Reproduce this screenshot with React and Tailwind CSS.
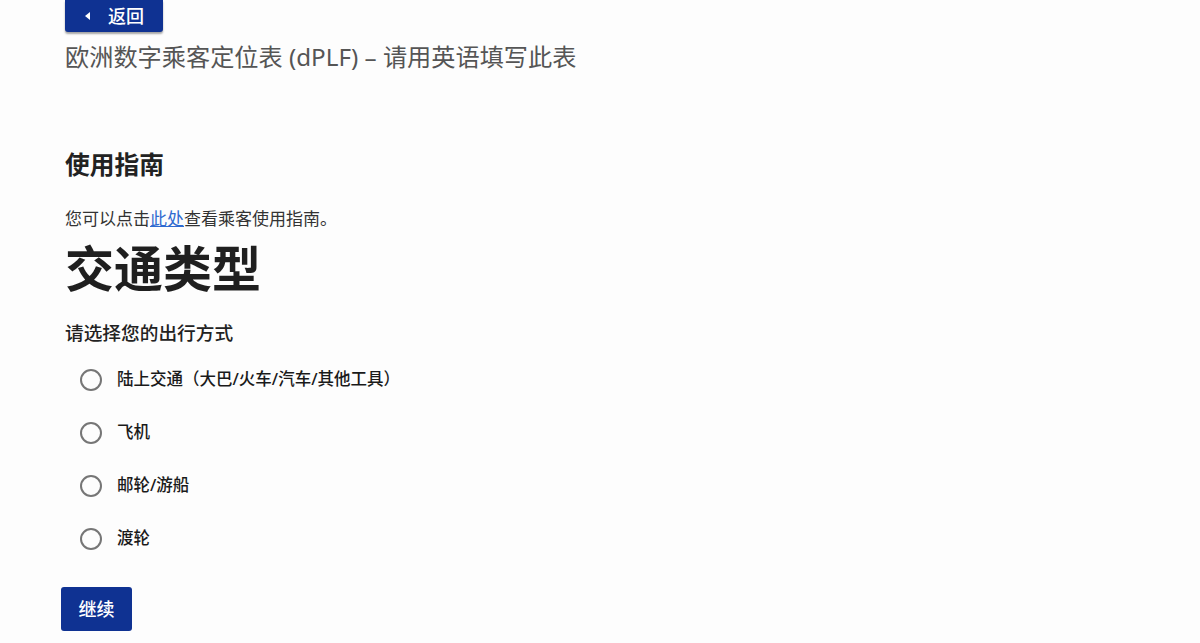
import { useState } from 'react';

const options = [
  '陆上交通（大巴/火车/汽车/其他工具）',
  '飞机',
  '邮轮/游船',
  '渡轮',
];

export default function App() {
  const [selected, setSelected] = useState(null);

  return (
    <div className="min-h-screen bg-[#fdfdfd] pl-[65px] font-['Noto_Sans','Noto_Sans_CJK_SC',sans-serif] text-[#222]">
      <button className="flex h-8 items-center gap-[17px] rounded-b-[3px] bg-[#0f3292] pl-[20px] pr-[19px] text-[18px] font-medium text-white shadow-[0_2px_2px_rgba(0,0,0,0.35)]">
        <svg width="6" height="8" viewBox="0 0 6 8">
          <path d="M5 0 L0 4 L5 8 Z" fill="white" />
        </svg>
        <span>返回</span>
      </button>

      <h1 className="mt-[10px] text-[24.2px] leading-[30px] text-[#555]">
        欧洲数字乘客定位表 (dPLF) – 请用英语填写此表
      </h1>

      <h2 className="mt-[78px] text-[24.75px] font-semibold leading-[30px] text-[#222]">使用指南</h2>

      <p className="mt-[27px] text-[17px] leading-6 text-[#333]">
        您可以点击<a href="#" className="text-[#2f6ad0] underline">此处</a>查看乘客使用指南。
      </p>

      <h2 className="mt-[9px] text-[49px] font-bold leading-[56px] text-[#1f1f1f]">交通类型</h2>

      <p className="mt-6 text-[18.7px] font-medium leading-[26px] text-[#222]">请选择您的出行方式</p>

      <div className="mt-[7px] flex flex-col">
        {options.map((opt, i) => (
          <label
            key={opt}
            className="flex h-[53px] cursor-pointer items-center gap-[15px] pl-[15px]"
            onClick={() => setSelected(i)}
          >
            <span className="flex h-[22px] w-[22px] items-center justify-center rounded-full border-2 border-[#767676]">
              {selected === i && <span className="h-3 w-3 rounded-full bg-[#0f3292]" />}
            </span>
            <span className="text-[16.5px] font-medium text-[#1a1a1a]">{opt}</span>
          </label>
        ))}
      </div>

      <button className="-ml-1 mt-[22px] flex h-11 w-[71px] items-center justify-center rounded-[3px] bg-[#0f3292] text-[18px] font-medium text-white">
        继续
      </button>
    </div>
  );
}
